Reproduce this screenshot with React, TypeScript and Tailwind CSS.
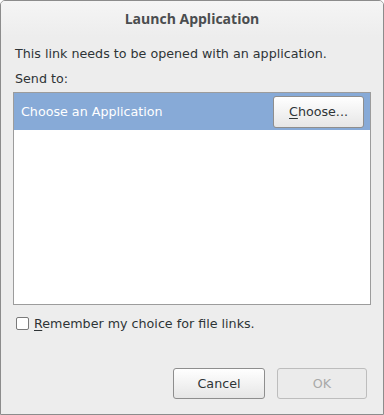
import React, { useState } from "react";

export default function App() {
  const [remember, setRemember] = useState(false);

  return (
    <div className="w-[384px] h-[415px] bg-[#ededed] border border-[#8c8c8c] rounded-t-[5px] flex flex-col font-['DejaVu_Sans',sans-serif] text-[12.7px] text-[#2e3436] overflow-hidden">
      {/* title bar */}
      <div className="h-[36px] shrink-0 bg-gradient-to-b from-[#f5f5f5] to-[#ededed] flex items-center justify-center pb-[2px]">
        <p className="font-['Open_Sans',sans-serif] font-bold text-[14px] text-[#4a4d4f]">
          Launch Application
        </p>
      </div>

      <div className="flex flex-col px-[12px] pt-[8px]">
        <p className="pl-[2px] leading-[18px]">
          This link needs to be opened with an application.
        </p>
        <p className="pl-[2px] mt-[7px] leading-[18px]">Send to:</p>

        <div className="mt-[4px] h-[213px] border border-[#9c9c9c] bg-white flex flex-col">
          <div className="h-[37px] bg-[#87aad7] flex items-center justify-between pl-[7px] pr-[6px]">
            <span className="text-white">Choose an Application</span>
            <button className="w-[91px] h-[32px] rounded-[3px] border border-[#8e8e8e] bg-gradient-to-b from-[#ffffff] to-[#e6e6e6] text-[#2e3436] shadow-[inset_0_1px_0_#fff]">
              <span className="underline underline-offset-2">C</span>hoose...
            </button>
          </div>
        </div>

        <label className="flex items-center gap-[5px] mt-[9px] pl-[3px]">
          <input
            type="checkbox"
            checked={remember}
            onChange={(e) => setRemember(e.target.checked)}
            className="appearance-none w-[13px] h-[13px] border border-[#7a7a7a] rounded-[2px] bg-white"
          />
          <span>
            <span className="underline underline-offset-2">R</span>emember my
            choice for file links.
          </span>
        </label>
      </div>

      <div className="mt-auto flex justify-end gap-[12px] pr-[16px] pb-[15px]">
        <button className="w-[92px] h-[31px] rounded-[3px] border border-[#8e8e8e] bg-gradient-to-b from-[#ffffff] to-[#e6e6e6] text-[#2e3436]">
          Cancel
        </button>
        <button
          disabled
          className="w-[90px] h-[31px] rounded-[3px] border border-[#bdbdbd] bg-[#ebebeb] text-[#a9a9a9]"
        >
          OK
        </button>
      </div>
    </div>
  );
}
